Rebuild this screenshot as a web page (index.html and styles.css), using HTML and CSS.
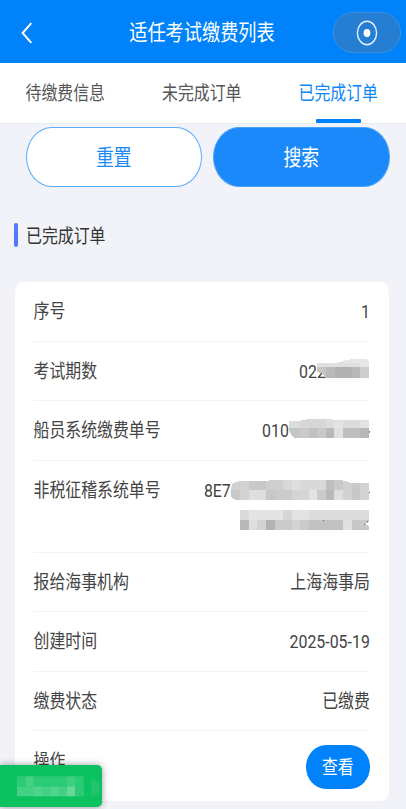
FILE: index.html
```
<!DOCTYPE html>
<html lang="zh-CN">
<head>
  <meta charset="UTF-8" />
  <meta name="viewport" content="width=device-width, initial-scale=1.0" />
  <title>适任考试缴费列表</title>
  <link rel="stylesheet" href="styles.css">
</head>
<body>
  <header class="navbar">
    <svg class="back" width="12" height="22" viewBox="0 0 12 22"><path d="M10.3 1.2 1.6 11l8.7 9.8" fill="none" stroke="#fff" stroke-width="1.9"/></svg>
    <h1><span class="t">适任考试缴费列表</span></h1>
    <div class="capsule">
      <svg width="22" height="26" viewBox="0 0 22 26"><ellipse cx="11" cy="13" rx="9.6" ry="11.7" fill="none" stroke="#e4f1fd" stroke-width="1.4"/><ellipse cx="11" cy="13" rx="3.4" ry="4.1" fill="#fff"/></svg>
    </div>
  </header>

  <nav class="tabs">
    <a class="tab"><span class="t">待缴费信息</span></a>
    <a class="tab"><span class="t">未完成订单</span></a>
    <a class="tab active"><span class="t">已完成订单</span></a>
  </nav>

  <main>
    <div class="actions">
      <button class="button"><span class="t">重置</span></button>
      <button class="button primary"><span class="t">搜索</span></button>
    </div>

    <h2 class="section-title"><span class="t">已完成订单</span></h2>

    <div class="card">
      <div class="row"><span class="t">序号</span><span class="t">1</span></div>
      <div class="row">
        <span class="t">考试期数</span>
        <div class="value">
          <span class="t">022</span>
          <svg class="mask overlap" width="53" height="26" viewBox="0 0 53 26">
            <path d="M0 5H19L27 3 35 1H49L52 3V9H0z" fill="#e0e0e0"/>
            <path d="M26 3 35 1H49L52 3V9H43V5H26z" fill="#e6e6e6"/>
            <path d="M0 9H9V19.5L6 16 0 14z" fill="#c6c6c6"/>
            <path d="M9 9h9v10.5H9z" fill="#b9b9b9"/>
            <path d="M18 9h17v10.5H18z" fill="#b0b0b0"/>
            <path d="M35 9h8v10.5h-8z" fill="#b8b8b8"/>
            <path d="M43 9h9v10.5h-9z" fill="#cdcdcd"/>
            <path d="M9 19.5h43v4H9z" fill="#fcfcfc"/>
          </svg>
        </div>
      </div>
      <div class="row">
        <span class="t">船员系统缴费单号</span>
        <div class="value">
          <span class="t">010</span>
          <svg class="mask" width="81" height="24" viewBox="0 0 81 24">
            <path d="M0 3H10L22 .5H38L46 2H80V9.5H0z" fill="#dcdcdc"/>
            <path d="M11 3 22 .5H37V9.5H11z" fill="#d6d6d6"/>
            <path d="M45 3h9v6.5h-9zM71 3h9v6.5h-9z" fill="#e3e3e3"/>
            <path d="M0 9.5H11V20H6L3 18 0 12z" fill="#c5c5c5"/>
            <path d="M11 9.5h9V20h-9z" fill="#cacaca"/>
            <path d="M20 9.5h9V20h-9z" fill="#c1c1c1"/>
            <path d="M29 9.5h8V20h-8z" fill="#c9c9c9"/>
            <path d="M37 9.5h8V20h-8z" fill="#b8b8b8"/>
            <path d="M45 9.5h9V20h-9z" fill="#e0e0e0"/>
            <path d="M54 9.5h17V20H54z" fill="#bfbfbf"/>
            <path d="M71 9.5h9V20h-9z" fill="#b7b7b7"/>
            <path d="M80 13h1v2h-1z" fill="#777"/>
          </svg>
        </div>
      </div>
      <div class="row tall">
        <span class="t">非税征稽系统单号</span>
        <div class="lines">
          <div class="value">
            <span class="t">8E7</span>
            <svg class="mask" width="139" height="22" viewBox="0 0 139 22">
              <path d="M0 10.5 1 5 8 2H18V10.5z" fill="#d2d2d2"/>
              <path d="M18 2H35V10.5H18z" fill="#c8c8c8"/>
              <path d="M35 2 40 1H52V10.5H35z" fill="#cfcfcf"/>
              <path d="M52 .5H61V10.5H52z" fill="#d8d8d8"/>
              <path d="M61 .5H69V10.5H61z" fill="#dedede"/>
              <path d="M69 .5H95V10.5H69z" fill="#d9d9d9"/>
              <path d="M95 .5H103V10.5H95z" fill="#bfbfbf"/>
              <path d="M103 .5H107L112 1.5V10.5H103z" fill="#cacaca"/>
              <path d="M112 1.5 121 4V10.5H112z" fill="#d0d0d0"/>
              <path d="M121 4H129V10.5H121z" fill="#c9c9c9"/>
              <path d="M129 4H138V20.5H129z" fill="#d2d2d2"/>
              <path d="M0 10.5H9V20.5H4L0 18z" fill="#c8c8c8"/>
              <path d="M9 10.5h9v10H9zM112 10.5h9v10h-9z" fill="#d2d2d2"/>
              <path d="M18 10.5h17v10H18zM103 10.5h9v10h-9z" fill="#dedede"/>
              <path d="M35 10.5h9v10h-9zM121 10.5h8v10h-8z" fill="#c7c7c7"/>
              <path d="M44 10.5h17v10H44zM86 10.5h9v10h-9z" fill="#cbcbcb"/>
              <path d="M61 10.5h17v10H61z" fill="#d5d5d5"/>
              <path d="M78 10.5h8v10h-8z" fill="#e3e3e3"/>
              <path d="M95 10.5h8v10h-8z" fill="#b9b9b9"/>
              <path d="M137.5 13h1v1h-1z" fill="#444"/>
            </svg>
          </div>
          <div class="value">
            <svg class="mask" width="130" height="21" viewBox="0 0 130 21">
              <path d="M0 1h9v9.5H0z" fill="#dadada"/>
              <path d="M9 1h34v9.5H9z" fill="#e4e4e4"/>
              <path d="M43 1h9v9.5h-9z" fill="#d6d6d6"/>
              <path d="M52 1h17v9.5H52z" fill="#e3e3e3"/>
              <path d="M69 1h60v9.5H69z" fill="#dcdcdc"/>
              <path d="M0 10.5h9v10H0z" fill="#b9b9b9"/>
              <path d="M9 10.5h8v10H9z" fill="#dedede"/>
              <path d="M17 10.5h9v10h-9z" fill="#d3d3d3"/>
              <path d="M26 10.5h9v10h-9z" fill="#b3b3b3"/>
              <path d="M35 10.5h17v10H35zM60 10.5h9v10h-9z" fill="#cbcbcb"/>
              <path d="M52 10.5h8v10h-8z" fill="#d4d4d4"/>
              <path d="M69 10.5h34v10H69z" fill="#c1c1c1"/>
              <path d="M103 10.5h9v10h-9z" fill="#e0e0e0"/>
              <path d="M112 10.5h17v10h-17z" fill="#c8c8c8"/>
              <path d="M125 15 129 13V17z" fill="#fff"/>
              <path d="M83 11h1v1h-1zM123.5 15h1v1h-1zM127 12h1v1h-1z" fill="#666"/>
            </svg>
          </div>
        </div>
      </div>
      <div class="row"><span class="t">报给海事机构</span><span class="t">上海海事局</span></div>
      <div class="row"><span class="t">创建时间</span><span class="t">2025-05-19</span></div>
      <div class="row"><span class="t">缴费状态</span><span class="t">已缴费</span></div>
      <div class="row last">
        <span class="t">操作</span>
        <button class="view"><span class="t">查看</span></button>
      </div>
    </div>
  </main>

  <div class="toast">
    <svg width="88" height="21" viewBox="0 0 88 21">
      <path d="M0 0h69v10.5H0z" fill="#2bca74"/>
      <path d="M9 0h8v10.5H9z" fill="#45d084"/>
      <path d="M52 0h8v10.5h-8z" fill="#41ce80"/>
      <path d="M0 10.5h69v10H0z" fill="#43d184"/>
      <path d="M17 10.5h9v10h-9zM35 10.5h8v10h-8z" fill="#50d58e"/>
      <path d="M52 10.5h8v10h-8z" fill="#66d99b"/>
      <path d="M60 10.5h9v10h-9z" fill="#2fc876"/>
      <path d="M77 3C84 4 86 8 86 12s-3 8-9 8z" fill="#22c46d"/>
    </svg>
  </div>
</body>
</html>
```
FILE: styles.css
```
* {
  margin: 0;
  padding: 0;
  box-sizing: border-box;
}

body {
  width: 406px;
  height: 809px;
  overflow: hidden;
  font-family: Roboto, "Noto Sans CJK SC", sans-serif;
  font-size: 15.9px;
  line-height: 24px;
  color: #444;
  background: #f2f3f9;
}

/* tall, narrow lettering */
.t {
  display: inline-block;
  white-space: nowrap;
  transform: translateY(1px) scaleY(1.2);
}

.navbar {
  display: flex;
  align-items: center;
  justify-content: space-between;
  height: 63px;
  padding: 2px 5px 0 21px;
  color: #fff;
  background: #0082fa;
}

.navbar h1 {
  margin: 0 0 2px 38px;
  font-size: 18.2px;
  font-weight: 400;
}

.capsule {
  display: flex;
  align-items: center;
  justify-content: center;
  width: 68px;
  height: 41px;
  border: 1px solid #3b90de;
  border-radius: 20px;
  background: #257ed1;
}

.tabs {
  display: flex;
  justify-content: space-between;
  height: 61px;
  padding: 0 28px 0 25.5px;
  border-bottom: 1px solid #e9eef4;
  background: #fff;
}

.tab {
  position: relative;
  display: flex;
  align-items: center;
  color: #555;
}

.tab.active {
  color: #0c86f8;
}

.tab.active::after {
  content: "";
  position: absolute;
  bottom: 0;
  left: 17px;
  width: 45px;
  height: 4px;
  border-radius: 1px;
  background: #0082fa;
}

.actions {
  display: flex;
  gap: 11px;
  padding: 3px 16.5px 0 25.5px;
}

.button {
  flex: 1;
  height: 60px;
  border: 1px solid #58acfb;
  border-radius: 26px / 30px;
  font: inherit;
  font-size: 17.8px;
  color: #1b89f9;
  background: #fff;
}

.button.primary {
  border-color: #4ba4fa;
  color: #fff;
  background: #1b89f9;
}

.section-title {
  display: flex;
  align-items: center;
  height: 24px;
  margin: 36px 0 0 14px;
  font-size: 15.9px;
  font-weight: 400;
  color: #333;
}

.section-title .t {
  margin-top: 2px;
}

.section-title::before {
  content: "";
  width: 4px;
  height: 24px;
  margin-right: 8px;
  border-radius: 2px;
  background: #5677fa;
}

.card {
  height: 519px;
  margin: 35px 17px 0 15px;
  padding: 0 19.2px 0 18.5px;
  border-radius: 8px / 10px;
  background: #fff;
}

.row {
  display: flex;
  align-items: center;
  justify-content: space-between;
  height: 59.5px;
  border-bottom: 1px solid #f2f3f5;
}

.row.tall {
  align-items: flex-start;
  height: 92px;
}

.row.tall > .t {
  margin-top: 17px;
}

.lines {
  display: flex;
  flex-direction: column;
  align-items: flex-end;
  padding-top: 14px;
}

.value {
  display: flex;
  align-items: center;
  height: 30px;
}

.mask {
  shape-rendering: crispEdges;
}

.overlap {
  z-index: 1;
  margin-left: -9px;
}

.row.last {
  align-items: flex-start;
  height: 70px;
  padding-top: 14px;
  border-bottom: 0;
}

.row.last > .t {
  margin-top: 4px;
}

.view {
  width: 64px;
  height: 44px;
  border: 0;
  border-radius: 20px / 22px;
  font: inherit;
  color: #fff;
  background: #0082fa;
}

.view .t {
  margin-top: -2px;
}

.toast {
  position: absolute;
  top: 765px;
  left: 0;
  display: flex;
  align-items: center;
  width: 102px;
  height: 42px;
  padding-left: 17px;
  border-radius: 0 5px 5px 0;
  background: #0bc160;
  box-shadow: 0 0 7px rgba(0, 0, 0, 0.4);
}
```
